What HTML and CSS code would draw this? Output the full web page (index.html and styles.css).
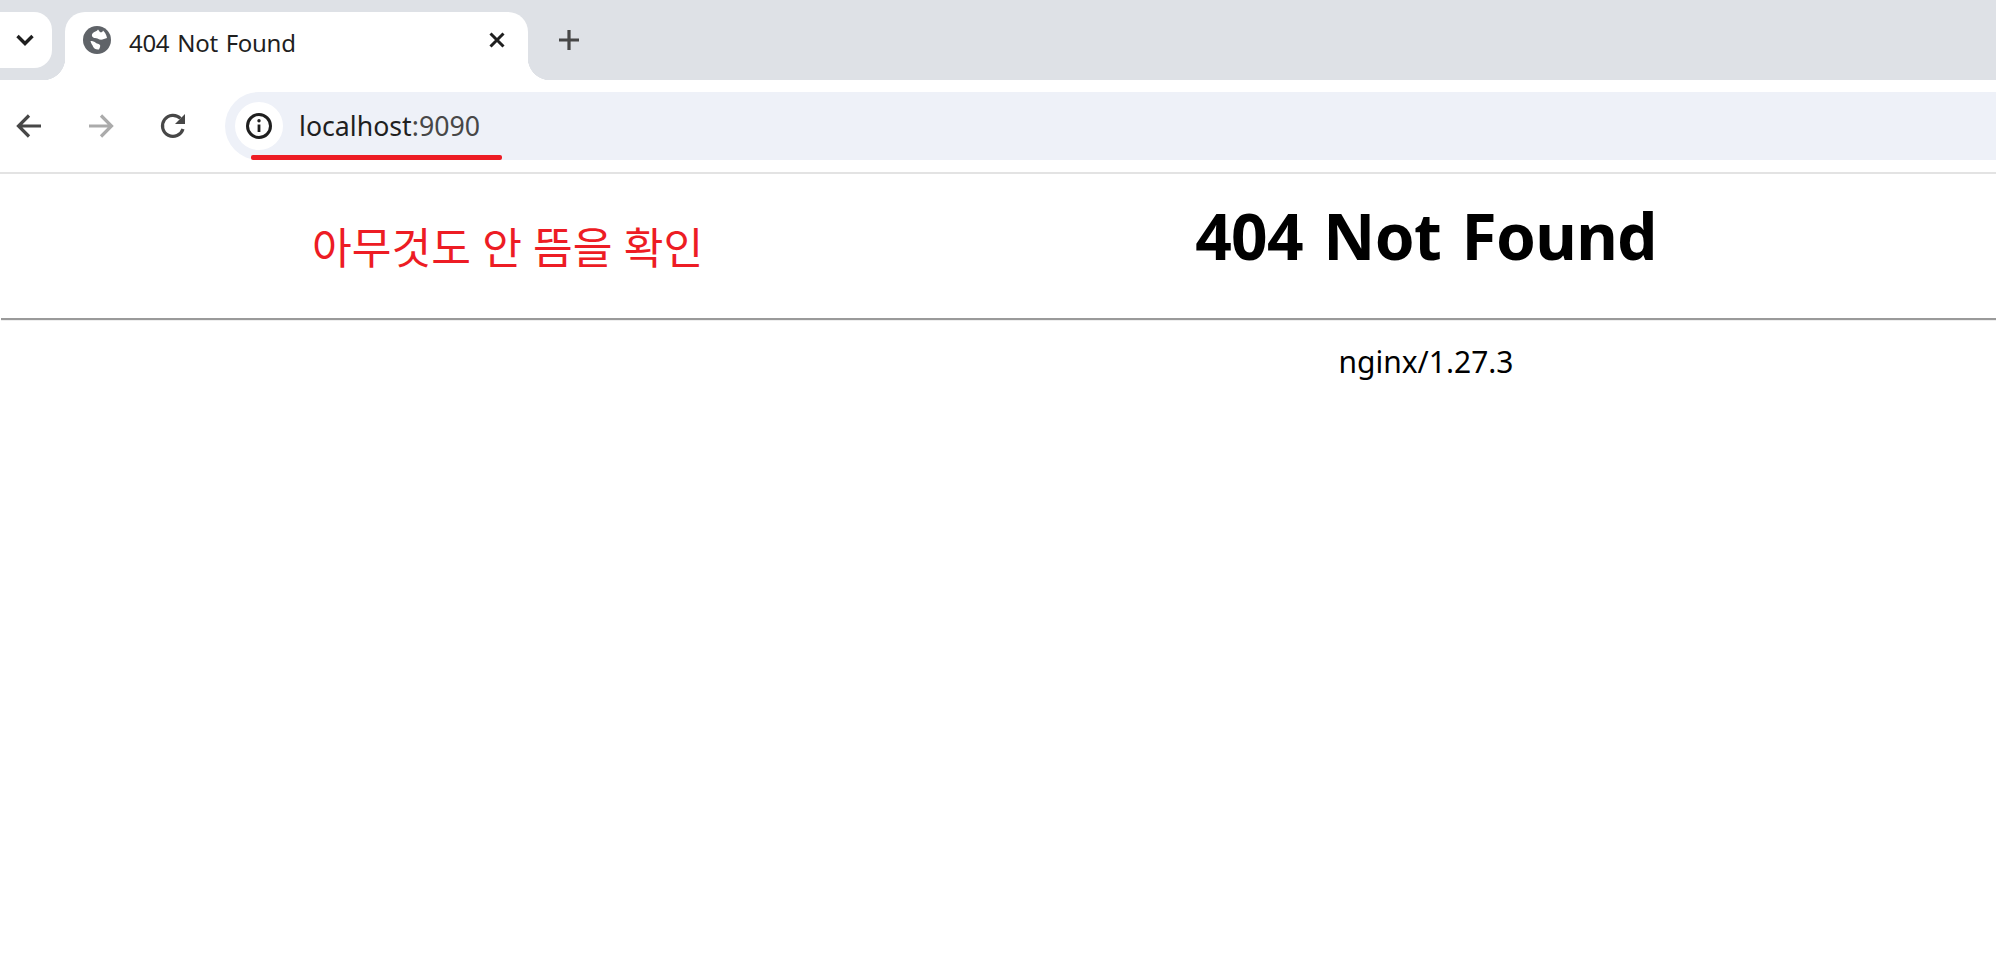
FILE: index.html
```html
<!DOCTYPE html>
<html lang="ko">
<head>
    <meta charset="UTF-8">
    <title>404 Not Found</title>
    <link rel="stylesheet" href="styles.css">
</head>
<body>
    <div class="tabstrip">
        <button class="tab-search">
            <svg width="20" height="20" viewBox="0 0 20 20"><path d="M2.500 6l7.500 7.500L17.500 6" fill="none" stroke="#1f1f1f" stroke-width="3.400"/></svg>
        </button>
        <div class="tab">
            <svg class="favicon" width="28" height="28" viewBox="0 0 28 28">
                <circle cx="14" cy="14" r="14" fill="#5f6368"/>
                <path d="M15 3.500c-1 2-4 2-5.500 4-1.500 2 0 4.500 2.500 4.500 2 0 3 1 4.500 1.500 2.500.5 5-.5 7.500-1.500-.5-3-2-6-4-7.500-.5 2-2.500 2.500-3.500 1-.5-.8-.8-1.500-1.500-2z" fill="#fff"/>
                <path d="M7.500 15c2 0 4 .5 5.500 2 1 1 3 .5 4 2 .5 1 0 2.500-1 4.500-3 .5-5-1-6-3-.5-1.500-2-3-2.500-5.500z" fill="#fff"/>
            </svg>
            <span class="tab-title">404 Not Found</span>
            <svg class="tab-close" width="18" height="18" viewBox="0 0 18 18"><path d="M2.500 2.500l13 13M15.500 2.500l-13 13" stroke="#1f1f1f" stroke-width="3"/></svg>
        </div>
        <svg class="new-tab" width="24" height="24" viewBox="0 0 24 24"><path d="M12 2v20M2 12h20" stroke="#474747" stroke-width="3.200"/></svg>
    </div>

    <div class="toolbar">
        <svg class="nav-icon" width="28" height="28" viewBox="0 0 28 28"><path d="M26 14H5M14 3.500L3.500 14 14 24.500" fill="none" stroke="#474747" stroke-width="3.200"/></svg>
        <svg class="nav-icon" width="28" height="28" viewBox="0 0 28 28"><path d="M2 14h21M14 3.500L24.500 14 14 24.500" fill="none" stroke="#ababab" stroke-width="3.200"/></svg>
        <svg class="nav-icon" width="28" height="28" viewBox="0 0 28 28"><path d="M24 17A10.500 10.500 0 1 1 21.500 6.500" fill="none" stroke="#474747" stroke-width="3.200"/><path d="M26 2v10H16z" fill="#474747"/></svg>
        <div class="omnibox">
            <span class="info-chip">
                <svg width="28" height="28" viewBox="0 0 28 28">
                    <circle cx="14" cy="14" r="11.500" fill="none" stroke="#1f1f1f" stroke-width="3"/>
                    <path d="M14 12.500v7.500" stroke="#1f1f1f" stroke-width="2.800"/>
                    <circle cx="14" cy="8.800" r="1.700" fill="#1f1f1f"/>
                </svg>
            </span>
            <span class="url">localhost<span class="url-port">:9090</span></span>
            <span class="mark-underline"></span>
        </div>
    </div>

    <div class="page">
        <center class="message"><h1>404 Not Found</h1></center>
        <hr>
        <center class="server">nginx/1.27.3</center>
        <p class="note">아무것도 안 뜸을 확인</p>
    </div>
</body>
</html>
```

FILE: styles.css
```css
* {
    box-sizing: border-box;
}

html, body {
    margin: 0;
    height: 100%;
    overflow: hidden;
}

body {
    background-color: #fff;
    color: #000;
    font-family: 'Noto Sans', 'Noto Sans CJK KR', sans-serif;
}

/* browser chrome */
.tabstrip {
    display: flex;
    align-items: flex-start;
    height: 80px;
    padding-top: 12px;
    background-color: #dee1e6;
}

.tab-search {
    position: relative;
    z-index: 1;
    display: flex;
    flex-shrink: 0;
    align-items: center;
    justify-content: center;
    width: 72px;
    height: 56px;
    margin-left: -20px;
    padding: 0 2px 0 20px;
    border: none;
    border-radius: 18px;
    background-color: #fff;
}

.tab {
    position: relative;
    display: flex;
    flex-shrink: 0;
    align-items: center;
    width: 463px;
    height: 68px;
    margin-left: 13px;
    padding: 0 22px 12px 18px;
    border-radius: 20px 20px 0 0;
    background-color: #fff;
}

/* the flared feet of the active tab */
.tab::before,
.tab::after {
    content: "";
    position: absolute;
    bottom: 0;
    width: 22px;
    height: 22px;
}

.tab::before {
    left: -22px;
    background: radial-gradient(circle at 0 0, #dee1e6 22px, #fff 22.500px);
}

.tab::after {
    right: -22px;
    background: radial-gradient(circle at 100% 0, #dee1e6 22px, #fff 22.500px);
}

.favicon {
    flex-shrink: 0;
}

.tab-title {
    flex-grow: 1;
    margin: 4px 0 0 18px;
    font-size: 24px;
    letter-spacing: -0.3px;
    word-spacing: 2px;
    color: #1f1f1f;
}

.tab-close {
    flex-shrink: 0;
}

.new-tab {
    margin: 16px 0 0 29px;
}

.toolbar {
    display: flex;
    align-items: center;
    height: 94px;
    padding-left: 15px;
    gap: 44px;
    border-bottom: 2px solid #e3e3e3;
    background-color: #fff;
}

.nav-icon {
    flex-shrink: 0;
}

.omnibox {
    position: relative;
    display: flex;
    align-items: center;
    flex-grow: 1;
    height: 68px;
    margin-left: -6px;
    padding-left: 10px;
    border-radius: 34px 0 0 34px;
    background-color: #eef1f8;
}

.info-chip {
    display: flex;
    align-items: center;
    justify-content: center;
    width: 48px;
    height: 48px;
    border-radius: 24px;
    background-color: #fff;
}

.url {
    margin: -2px 0 0 16px;
    font-size: 26.700px;
    color: #1f1f1f;
}

.url-port {
    color: #474747;
}

/* red marks added on the screenshot */
.mark-underline {
    position: absolute;
    left: 26px;
    top: 63px;
    width: 251px;
    height: 5px;
    border-radius: 2px;
    background-color: #ed1c24;
}

/* nginx error page, wider than the captured window */
.page {
    position: relative;
    width: 2852px;
}

.message h1 {
    margin: 0;
    padding: 18px 0 0;
    height: 144px;
    font-size: 64px;
    font-weight: 700;
    letter-spacing: -0.7px;
    word-spacing: 4.500px;
    line-height: 87px;
}

.page hr {
    margin: 0 0 0 1px;
    height: 3px;
    border: none;
    border-top: 2px solid #9a9a9a;
    border-bottom: 1px solid #eee;
}

.server {
    margin-top: 20px;
    font-size: 30px;
    line-height: 41px;
}

.note {
    position: absolute;
    left: 312px;
    top: 44px;
    margin: 0;
    font-size: 43.200px;
    line-height: 60px;
    color: #ed1c24;
}
```
